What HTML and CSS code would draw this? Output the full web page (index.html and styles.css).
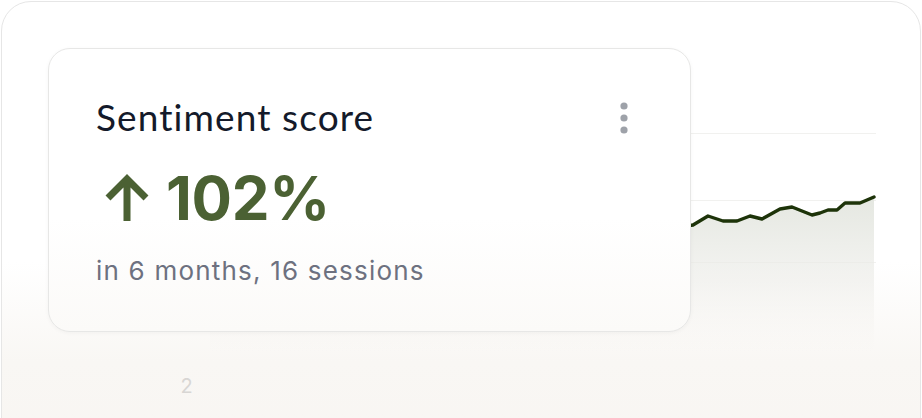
FILE: index.html
```
<!DOCTYPE html>
<html lang="en">
<head>
<meta charset="utf-8">
<title>Sentiment score</title>
<link rel="stylesheet" href="styles.css">
</head>
<body>
<div class="panel">
  <div class="chart">
    <div class="axis">
      <span></span>
      <span></span>
      <span></span>
      <span>2</span>
    </div>
    <svg class="plot" width="666" height="300" viewBox="0 0 666 300">
      <defs>
        <linearGradient id="fill" x1="0" y1="0" x2="0" y2="1">
          <stop offset="0" stop-color="#e3e6df" stop-opacity="0.95"/>
          <stop offset="0.55" stop-color="#ecece8" stop-opacity="0.6"/>
          <stop offset="1" stop-color="#f4f1ed" stop-opacity="0"/>
        </linearGradient>
      </defs>
      <g class="grid">
        <line x1="0" y1="0.5" x2="666" y2="0.5"/>
        <line x1="0" y1="67.5" x2="666" y2="67.5"/>
        <line x1="0" y1="129.5" x2="666" y2="129.5"/>
      </g>
      <path class="area" d="M0 150 L40 140 L80 145 L120 130 L160 132 L200 120 L240 126 L280 112 L320 116 L360 104 L400 100 L440 96 L470 94 L483 92 L498 83 L513 88 L527 88 L540 83 L552 86 L570 76 L582 74 L602 82 L610 80 L618 77 L627 77 L635 70 L650 70 L664 64 L664 220 L0 220 Z"/>
      <polyline class="line" points="0,150 40,140 80,145 120,130 160,132 200,120 240,126 280,112 320,116 360,104 400,100 440,96 470,94 483,92 498,83 513,88 527,88 540,83 552,86 570,76 582,74 602,82 610,80 618,77 627,77 635,70 650,70 664,64"/>
    </svg>
  </div>

  <div class="card">
    <div class="card-head">
      <h2 class="title">Sentiment score</h2>
      <svg class="menu" width="12" height="36" viewBox="0 0 12 36" aria-label="More options">
        <circle cx="6" cy="6" r="3.6"/>
        <circle cx="6" cy="18" r="3.6"/>
        <circle cx="6" cy="30" r="3.6"/>
      </svg>
    </div>
    <div class="value">
      <svg class="arrow" width="48" height="48" viewBox="0 0 48 48">
        <path d="M24 47 V6 M5 24 L24 5 L43 24"/>
      </svg>
      <span class="num">102%</span>
    </div>
    <p class="sub">in 6 months, 16 sessions</p>
  </div>
</div>
</body>
</html>
```
FILE: styles.css
```
html, body {
  margin: 0;
  padding: 0;
  background: #ffffff;
}

body {
  padding: 1px 0 0 1px;
  font-family: Inter, "Liberation Sans", sans-serif;
}

.panel {
  position: relative;
  box-sizing: border-box;
  width: 920px;
  height: 460px;
  border: 1.5px solid #e6e6e6;
  border-radius: 30px;
  background: linear-gradient(180deg, #ffffff 0px, #ffffff 260px, #f9f7f4 360px, #f8f5f2 460px);
  padding: 131px 0 0 158px;
}

.chart {
  display: grid;
  grid-template-columns: 50px 666px;
}

.axis {
  display: flex;
  flex-direction: column;
  padding-top: 36px;
}

.axis span {
  height: 62px;
  display: flex;
  align-items: center;
  justify-content: center;
  padding-left: 3px;
  font-size: 20px;
  color: #d8d6d4;
  line-height: 1;
}

.plot {
  display: block;
  overflow: visible;
}

.grid line {
  stroke: #f1f1ef;
  stroke-width: 1.2;
}

.area {
  fill: url(#fill);
}

.line {
  fill: none;
  stroke: #1d3309;
  stroke-width: 3.4;
  stroke-linejoin: round;
  stroke-linecap: round;
}

.card {
  position: absolute;
  left: 46px;
  top: 46px;
  box-sizing: border-box;
  width: 643px;
  height: 284px;
  border: 1.5px solid #e7e7e6;
  border-radius: 22px;
  background: linear-gradient(180deg, #ffffff 0%, #ffffff 60%, #fbfaf8 100%);
  box-shadow: 0 1px 4px rgba(0, 0, 0, 0.04);
  padding: 46px 60px 0 47px;
}

.card-head {
  display: flex;
  justify-content: space-between;
  align-items: flex-start;
}

.title {
  margin: 0;
  font-family: Lato, "Noto Sans", sans-serif;
  font-weight: 400;
  font-size: 37px;
  line-height: 44px;
  color: #141a2a;
  letter-spacing: 1.1px;
}

.menu {
  display: block;
  margin-top: 5px;
  fill: #9ea2a9;
}

.value {
  display: flex;
  align-items: center;
  gap: 15px;
  margin-top: 27px;
  margin-left: 7px;
}

.arrow {
  display: block;
  fill: none;
  stroke: #4b6133;
  stroke-width: 7;
  stroke-linecap: butt;
  stroke-linejoin: miter;
}

.num {
  font-family: Inter, "Liberation Sans", sans-serif;
  font-weight: 650;
  font-size: 60px;
  line-height: 64px;
  color: #4b6133;
  letter-spacing: -0.3px;
}

.sub {
  margin: 25px 0 0;
  font-family: Inter, "Liberation Sans", sans-serif;
  font-size: 26px;
  line-height: 32px;
  color: #6d7180;
  letter-spacing: 1.2px;
}
```
